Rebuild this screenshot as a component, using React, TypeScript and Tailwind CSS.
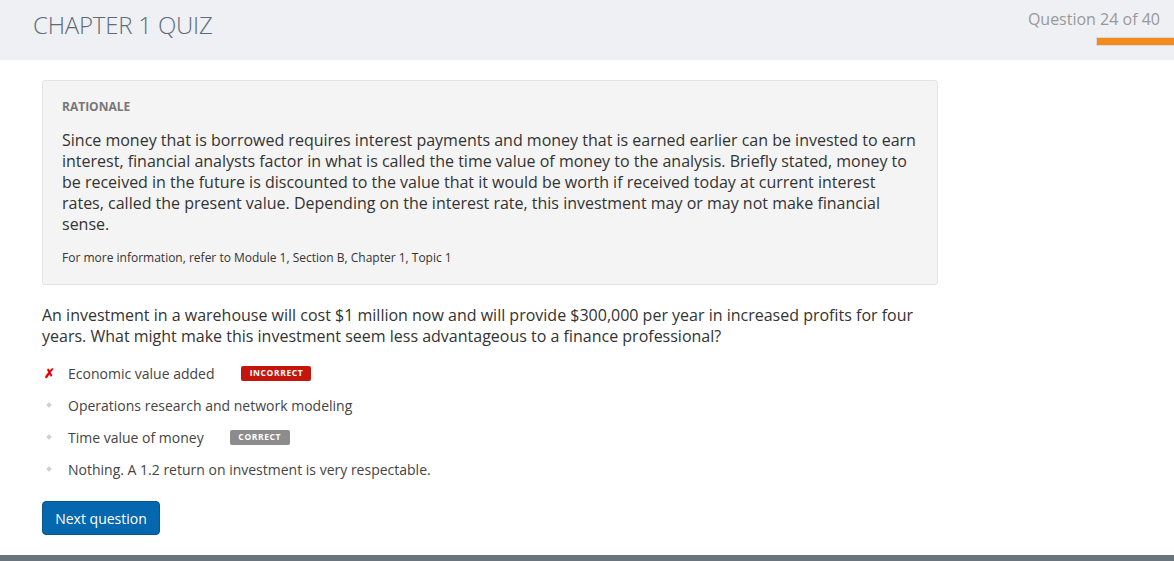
export default function App() {
  const options = [
    { text: "Economic value added", mark: "wrong", badge: "INCORRECT" },
    { text: "Operations research and network modeling" },
    { text: "Time value of money", badge: "CORRECT" },
    { text: "Nothing. A 1.2 return on investment is very respectable." },
  ];

  return (
    <div className="w-full h-[561px] bg-white flex flex-col font-['Open_Sans',sans-serif] text-[#333]">
      {/* header */}
      <header className="h-[60px] shrink-0 bg-[#eff0f4] flex justify-between">
        <h1 className="pl-[33px] pt-[7px] text-[24px] font-light text-[#5f6b77] tracking-[-0.2px]">
          CHAPTER 1 QUIZ
        </h1>
        <div className="flex flex-col items-end pt-[8px]">
          <p className="pr-[14px] text-[16px] text-[#999] leading-[22px]">Question 24 of 40</p>
          <div className="mt-[7px] w-[78px] h-[9px] bg-[#f28c1e] border border-[#d9d9d9] border-r-0"></div>
        </div>
      </header>

      {/* main */}
      <main className="flex-1 px-[42px] pt-[20px]">
        <div className="w-[896px]">
          {/* rationale */}
          <section className="h-[205px] bg-[#f4f4f4] border border-[#e4e4e4] rounded-[3px] pl-[19px] pr-[16px] pt-[17px]">
            <p className="text-[12px] font-bold text-[#777] leading-[18px]">RATIONALE</p>
            <p className="mt-[14px] text-[16px] leading-[21px] text-[#333]">
              Since money that is borrowed requires interest payments and money that is earned earlier can be invested to earn
              interest, financial analysts factor in what is called the time value of money to the analysis. Briefly stated, money to
              be received in the future is discounted to the value that it would be worth if received today at current interest
              rates, called the present value. Depending on the interest rate, this investment may or may not make financial
              sense.
            </p>
            <p className="mt-[14px] text-[12px] leading-[18px] text-[#333]">
              For more information, refer to Module 1, Section B, Chapter 1, Topic 1
            </p>
          </section>

          {/* question */}
          <p className="mt-[20px] text-[16px] leading-[21px] text-[#333] pr-[10px]">
            An investment in a warehouse will cost $1 million now and will provide $300,000 per year in increased profits for four
            years. What might make this investment seem less advantageous to a finance professional?
          </p>

          <ul className="mt-[10px] flex flex-col">
            {options.map((o) => (
              <li key={o.text} className="h-[32px] flex items-center text-[14px] text-[#444]">
                <span className="w-[26px] flex justify-center pr-[12px]">
                  {o.mark === "wrong" ? (
                    <span className="text-[#e00000] text-[13px] font-bold leading-none">✗</span>
                  ) : (
                    <span className="w-[4px] h-[4px] rotate-45 bg-[#d0d0d0]"></span>
                  )}
                </span>
                <span>{o.text}</span>
                {o.badge === "INCORRECT" && (
                  <span className="ml-[27px] w-[70px] h-[15px] flex items-center justify-center rounded-[2px] bg-[#c4160c] text-white text-[8.5px] font-bold tracking-[0.6px]">
                    INCORRECT
                  </span>
                )}
                {o.badge === "CORRECT" && (
                  <span className="ml-[26px] w-[60px] h-[15px] flex items-center justify-center rounded-[2px] bg-[#8c8c8c] text-white text-[8.5px] font-bold tracking-[0.6px]">
                    CORRECT
                  </span>
                )}
              </li>
            ))}
          </ul>

          <button className="mt-[16px] w-[118px] h-[34px] rounded-[4px] bg-[#0567ad] border border-[#04578f] text-white text-[14px]">
            Next question
          </button>
        </div>
      </main>

      {/* footer bar */}
      <div className="h-[6px] shrink-0 bg-[#6a747c]"></div>
    </div>
  );
}
